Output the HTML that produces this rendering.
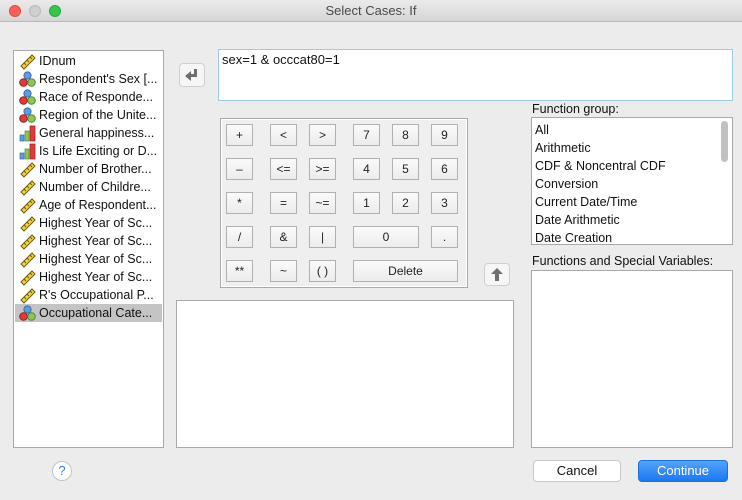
<!DOCTYPE html>
<html><head><meta charset="utf-8"><style>
*{margin:0;padding:0;box-sizing:border-box}
body{width:742px;height:500px;background:#ececec;font-family:"Liberation Sans",sans-serif;font-size:13px;color:#111;position:relative;overflow:hidden}
.a{position:absolute}
.tb{left:0;top:0;width:742px;height:22px;background:linear-gradient(#ebebeb,#d5d5d5);border-bottom:1px solid #b8b8b8;text-align:center;line-height:22px;color:#4a4a4a;font-size:13px}
.dot{top:5px;width:12px;height:12px;border-radius:50%}
.box{background:#fff;border:1px solid #a9a9a9}
.row{position:absolute;left:1px;width:147px;height:18px;line-height:18px;padding-left:24px;white-space:nowrap;font-size:12.5px}
.row svg{position:absolute;left:4px;top:1px}
.k{position:absolute;width:27px;height:22px;border:1px solid #b0b0b0;background:linear-gradient(#fafafa,#ececec);text-align:center;line-height:20px;font-size:12px;color:#222}
.lab{font-size:12.5px;color:#111}
.fg div{height:18px;line-height:18px;padding-left:3px;font-size:12.5px}
.btn{border-radius:4px;text-align:center;line-height:20px;font-size:13px}
</style></head><body>
<div class="a tb">Select Cases: If</div>
<div class="a dot" style="left:9px;background:#fc605c;border:1px solid #de4a45"></div>
<div class="a dot" style="left:29px;background:#cfcfcf;border:1px solid #b8b8b8"></div>
<div class="a dot" style="left:49px;background:#34c84a;border:1px solid #27a83a"></div>

<div class="a box" style="left:13px;top:50px;width:151px;height:398px">
<svg width="0" height="0" style="position:absolute"><defs>
<g id="r"><path d="M2 13 L13 2 L16 5 L5 16 Z" fill="#f4d23c" stroke="#6b5a10" stroke-width="1"/><path d="M5 10l2 2M8 7l2 2M11 4l2 2" stroke="#6b5a10"/></g>
<g id="n"><circle cx="8.5" cy="4.5" r="3.6" fill="#5d9de0" stroke="#2f6db0"/><circle cx="4.5" cy="11.5" r="3.8" fill="#e23a3a" stroke="#9a1c1c"/><circle cx="12.5" cy="11.5" r="3.8" fill="#8cc65a" stroke="#4e8a2a"/></g>
<g id="o"><rect x="1" y="10" width="4" height="6" fill="#5d9de0" stroke="#2f6db0" stroke-width=".7"/><rect x="6" y="6" width="4" height="10" fill="#8cc65a" stroke="#4e8a2a" stroke-width=".7"/><rect x="11" y="1" width="5" height="15" fill="#e23a3a" stroke="#9a1c1c" stroke-width=".7"/></g>
</defs></svg>
<div class="row" style="top:1px"><svg width="18" height="18"><use href="#r"/></svg>IDnum</div>
<div class="row" style="top:19px"><svg width="18" height="18"><use href="#n"/></svg>Respondent's Sex [...</div>
<div class="row" style="top:37px"><svg width="18" height="18"><use href="#n"/></svg>Race of Responde...</div>
<div class="row" style="top:55px"><svg width="18" height="18"><use href="#n"/></svg>Region of the Unite...</div>
<div class="row" style="top:73px"><svg width="18" height="18"><use href="#o"/></svg>General happiness...</div>
<div class="row" style="top:91px"><svg width="18" height="18"><use href="#o"/></svg>Is Life Exciting or D...</div>
<div class="row" style="top:109px"><svg width="18" height="18"><use href="#r"/></svg>Number of Brother...</div>
<div class="row" style="top:127px"><svg width="18" height="18"><use href="#r"/></svg>Number of Childre...</div>
<div class="row" style="top:145px"><svg width="18" height="18"><use href="#r"/></svg>Age of Respondent...</div>
<div class="row" style="top:163px"><svg width="18" height="18"><use href="#r"/></svg>Highest Year of Sc...</div>
<div class="row" style="top:181px"><svg width="18" height="18"><use href="#r"/></svg>Highest Year of Sc...</div>
<div class="row" style="top:199px"><svg width="18" height="18"><use href="#r"/></svg>Highest Year of Sc...</div>
<div class="row" style="top:217px"><svg width="18" height="18"><use href="#r"/></svg>Highest Year of Sc...</div>
<div class="row" style="top:235px"><svg width="18" height="18"><use href="#r"/></svg>R's Occupational P...</div>
<div class="row" style="top:253px;background:#c4c4c4"><svg width="18" height="18"><use href="#n"/></svg>Occupational Cate...</div>
</div>

<div class="a" style="left:179px;top:63px;width:26px;height:24px;border:1px solid #cfcfcf;border-radius:4px;background:#f6f6f6">
<svg width="24" height="22"><path d="M17 5 L17 13 L11 13 L11 17 L5 12 L11 7 L11 10 L14 10 L14 5 Z" fill="#6e6e6e"/></svg></div>
<div class="a" style="left:218px;top:49px;width:515px;height:52px;background:#fff;border:1px solid #9ccbe3;padding:2px 3px;font-size:13px">sex=1 &amp; occcat80=1</div>

<div class="a" style="left:220px;top:118px;width:248px;height:170px;border:1px solid #a9a9a9;background:#efefef;box-shadow:inset 0 0 0 1px #fff"></div>
<div class="k" style="left:226px;top:124px">+</div><div class="k" style="left:270px;top:124px">&lt;</div><div class="k" style="left:309px;top:124px">&gt;</div><div class="k" style="left:353px;top:124px">7</div><div class="k" style="left:392px;top:124px">8</div><div class="k" style="left:431px;top:124px">9</div>
<div class="k" style="left:226px;top:158px">–</div><div class="k" style="left:270px;top:158px">&lt;=</div><div class="k" style="left:309px;top:158px">&gt;=</div><div class="k" style="left:353px;top:158px">4</div><div class="k" style="left:392px;top:158px">5</div><div class="k" style="left:431px;top:158px">6</div>
<div class="k" style="left:226px;top:192px">*</div><div class="k" style="left:270px;top:192px">=</div><div class="k" style="left:309px;top:192px">~=</div><div class="k" style="left:353px;top:192px">1</div><div class="k" style="left:392px;top:192px">2</div><div class="k" style="left:431px;top:192px">3</div>
<div class="k" style="left:226px;top:226px">/</div><div class="k" style="left:270px;top:226px">&amp;</div><div class="k" style="left:309px;top:226px">|</div><div class="k" style="left:353px;top:226px;width:66px">0</div><div class="k" style="left:431px;top:226px">.</div>
<div class="k" style="left:226px;top:260px">**</div><div class="k" style="left:270px;top:260px">~</div><div class="k" style="left:309px;top:260px">( )</div><div class="k" style="left:353px;top:260px;width:105px">Delete</div>

<div class="a" style="left:484px;top:263px;width:26px;height:23px;border:1px solid #cfcfcf;border-radius:4px;background:#f6f6f6">
<svg width="24" height="21"><path d="M12 4 L6 10 L10 10 L10 17 L14 17 L14 10 L18 10 Z" fill="#6e6e6e"/></svg></div>

<div class="a box" style="left:176px;top:300px;width:338px;height:148px"></div>

<div class="a lab" style="left:532px;top:102px">Function group:</div>
<div class="a box fg" style="left:531px;top:117px;width:202px;height:128px;padding-top:3px">
<div>All</div><div>Arithmetic</div><div>CDF &amp; Noncentral CDF</div><div>Conversion</div><div>Current Date/Time</div><div>Date Arithmetic</div><div>Date Creation</div>
<div style="position:absolute;right:4px;top:3px;width:7px;height:41px;border-radius:4px;background:#c1c1c1;padding:0"></div>
</div>
<div class="a lab" style="left:532px;top:254px">Functions and Special Variables:</div>
<div class="a box" style="left:531px;top:270px;width:202px;height:178px"></div>

<div class="a" style="left:52px;top:461px;width:20px;height:20px;border-radius:50%;background:#fff;border:1px solid #c4c4c4;text-align:center;line-height:18px;color:#2f7cf6;font-size:13px">?</div>
<div class="a btn" style="left:533px;top:460px;width:88px;height:22px;background:#fff;border:1px solid #c8c8c8">Cancel</div>
<div class="a btn" style="left:638px;top:460px;width:90px;height:22px;background:linear-gradient(#54a3fb,#1a78f2);border:1px solid #1b6fe0;color:#fff">Continue</div>
</body></html>
